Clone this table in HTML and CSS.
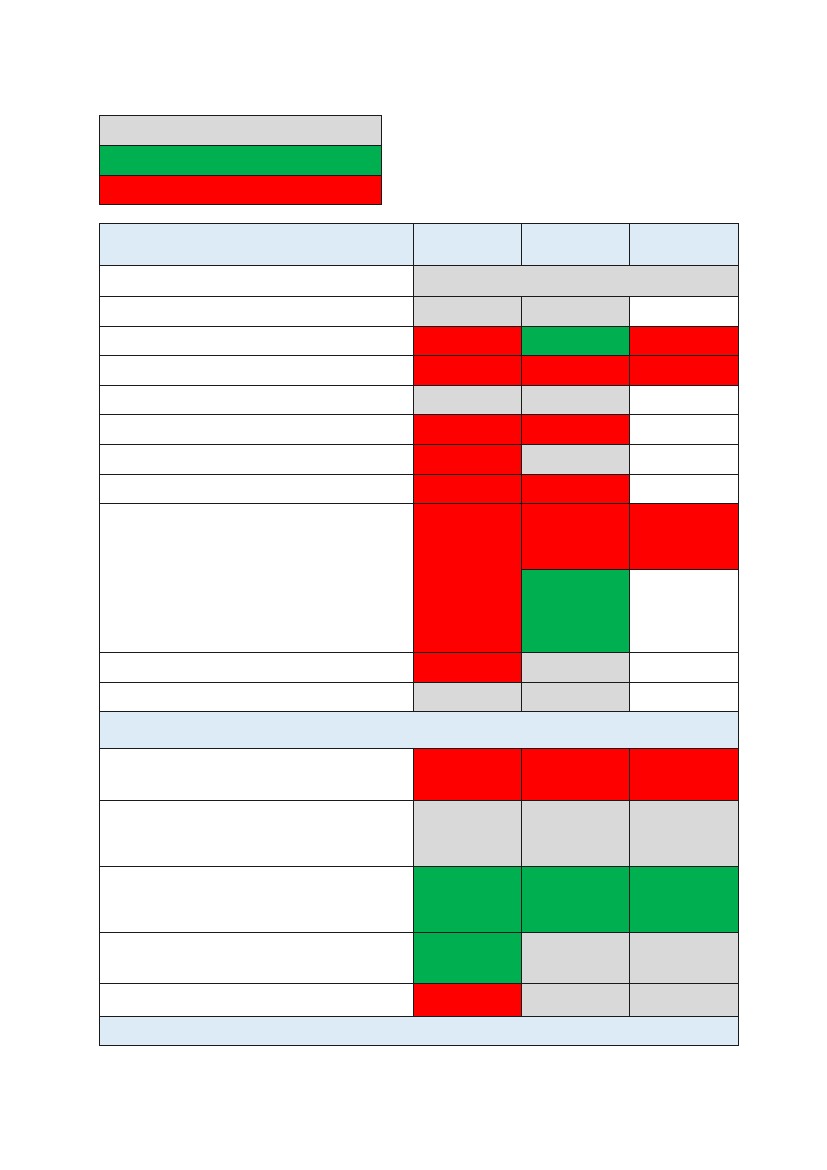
FILE: index.html
```html
<!DOCTYPE html>
<html>
<head>
<meta charset="utf-8">
<link rel="stylesheet" href="styles.css">
</head>
<body>
<div class="page">
  <div class="legend">
    <div class="gray"></div>
    <div class="green"></div>
    <div class="red"></div>
  </div>
  <div class="matrix">
    <div class="blue"></div><div class="blue"></div><div class="blue"></div><div class="blue"></div>
    <div class="white"></div><div class="gray span3"></div>
    <div class="white"></div><div class="gray"></div><div class="gray"></div><div class="white"></div>
    <div class="white"></div><div class="red"></div><div class="green"></div><div class="red"></div>
    <div class="white"></div><div class="red"></div><div class="red"></div><div class="red"></div>
    <div class="white"></div><div class="gray"></div><div class="gray"></div><div class="white"></div>
    <div class="white"></div><div class="red"></div><div class="red"></div><div class="white"></div>
    <div class="white"></div><div class="red"></div><div class="gray"></div><div class="white"></div>
    <div class="white"></div><div class="red"></div><div class="red"></div><div class="white"></div>
    <div class="white rspan2"></div><div class="red rspan2"></div><div class="red"></div><div class="red"></div>
    <div class="green"></div><div class="white"></div>
    <div class="white"></div><div class="red"></div><div class="gray"></div><div class="white"></div>
    <div class="white"></div><div class="gray"></div><div class="gray"></div><div class="white"></div>
    <div class="blue span4"></div>
    <div class="white"></div><div class="red"></div><div class="red"></div><div class="red"></div>
    <div class="white"></div><div class="gray"></div><div class="gray"></div><div class="gray"></div>
    <div class="white"></div><div class="green"></div><div class="green"></div><div class="green"></div>
    <div class="white"></div><div class="green"></div><div class="gray"></div><div class="gray"></div>
    <div class="white"></div><div class="red"></div><div class="gray"></div><div class="gray"></div>
    <div class="blue span4"></div>
  </div>
</div>
</body>
</html>
```

FILE: styles.css
```css
html, body {
  margin: 0;
  padding: 0;
  background: #ffffff;
  font-family: "Liberation Sans", Arial, sans-serif;
}

.page {
  padding: 115px 0 0 99px;
  display: flex;
  flex-direction: column;
  align-items: flex-start;
  gap: 18px;
}

.legend {
  display: grid;
  grid-template-columns: 281px;
  grid-template-rows: 29px 29px 28px;
  gap: 1px;
  border: 1px solid #1a1a1a;
  background: #1a1a1a;
}

.matrix {
  display: grid;
  grid-template-columns: 313px 107px 107px 108px;
  grid-template-rows: 41px 30px 29px 28px 29px 28px 29px 29px 28px 65px 82px 29px 28px 36px 51px 65px 65px 50px 32px 28px;
  gap: 1px;
  border: 1px solid #1a1a1a;
  background: #1a1a1a;
}

.gray { background: #d9d9d9; }
.green { background: #00b050; }
.red { background: #ff0000; }
.blue { background: #ddebf7; }
.white { background: #ffffff; }

.span3 { grid-column: span 3; }
.span4 { grid-column: span 4; }
.rspan2 { grid-row: span 2; }
```
